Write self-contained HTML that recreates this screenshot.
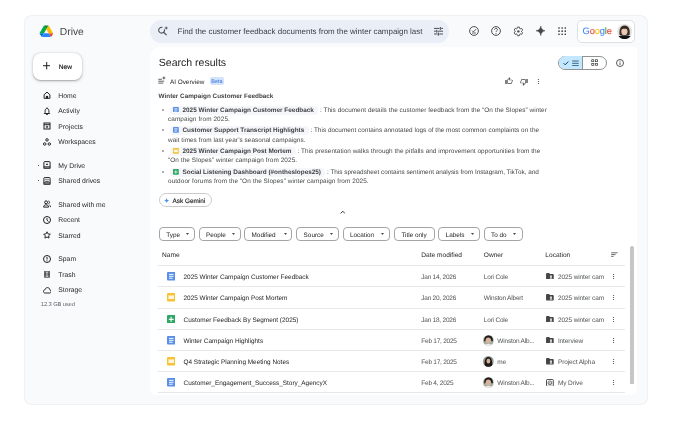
<!DOCTYPE html><html><head><meta charset="utf-8"><style>
html,body{margin:0;padding:0;width:680px;height:421px;overflow:hidden;background:#fff;font-family:"Liberation Sans",sans-serif;}
.a{position:absolute;}
.t{position:absolute;white-space:nowrap;transform:translateZ(0);text-rendering:geometricPrecision;}
</style></head><body>
<div class="a" style="left:25.00px;top:16.00px;width:622.20px;height:387.80px;background:#f9fafc;border-radius:6px;box-shadow:0 0 0 0.7px #e9ebee;"></div>
<svg class="a" style="left:39.30px;top:24.80px" width="14.6" height="12.2" viewBox="0 0 24 22">
<path d="M1.9 18.6l1.1 1.9c.2.4.6.7 1 .9L7.8 15H0c0 .4.1.8.3 1.2z" fill="#0066da"/>
<path d="M12 7.5L8.2 1c-.4.2-.7.5-1 .9L.3 13.8c-.2.4-.3.8-.3 1.2h7.8z" fill="#00ac47"/>
<path d="M20.5 21.4c.4-.2.8-.5 1-.9l.4-.8 2.1-3.5c.2-.4.3-.8.3-1.2h-7.8l1.7 3.3z" fill="#ea4335"/>
<path d="M12 7.5L15.8 1c-.4-.2-.8-.3-1.3-.3H9.5c-.5 0-.9.1-1.3.3z" fill="#00832d"/>
<path d="M16.2 15H7.8L4 21.5c.4.2.8.3 1.3.3h13.5c.5 0 .9-.1 1.3-.3z" fill="#2684fc"/>
<path d="M20.4 7.9l-3.5-6c-.2-.4-.6-.7-1-.9L12 7.5 16.2 15H24c0-.4-.1-.8-.3-1.2z" fill="#ffba00"/>
</svg>
<div class="t" style="left:59.80px;top:26.14px;font-size:10.3px;line-height:13.39px;color:#444746;font-weight:400;">Drive</div>
<div class="a" style="left:150.00px;top:20.00px;width:299.00px;height:22.70px;background:#eaeef7;border-radius:11.3px;"></div>
<svg class="a" style="left:157.00px;top:25.00px" width="11" height="11" viewBox="0 0 11 11"><path d="M5.35 2.4A2.9 2.9 0 1 0 7.4 4.45" fill="none" stroke="#444746" stroke-width="1.05"/><path d="M6.7 7.3L9.6 10.2" stroke="#444746" stroke-width="1.1"/><path d="M9.2 1.5C9.3 2.4 9.8 2.9 10.7 3 9.8 3.1 9.3 3.6 9.2 4.5 9.1 3.6 8.6 3.1 7.7 3 8.6 2.9 9.1 2.4 9.2 1.5z" fill="#444746" stroke="#444746" stroke-width=".3"/></svg>
<div class="t" style="left:177.60px;top:27.49px;font-size:7.94px;line-height:10.32px;color:#3c4043;font-weight:400;">Find the customer feedback documents from the winter campaign last</div>
<svg class="a" style="left:434.10px;top:27.00px" width="9.2" height="9" viewBox="0 0 9.2 9"><g stroke="#444746" stroke-width="0.95"><path d="M0 1.4h5.6M7.2 1.4h2M0 4.2h1.9M3.5 4.2h5.7M0 7.0h3.6M5.2 7.0h4"/><path d="M6.4 0v2.9M2.7 2.8v2.9M4.4 5.6v3.2"/></g></svg>
<svg class="a" style="left:468.60px;top:26.00px" width="10" height="10" viewBox="0 0 10 10"><circle cx="5" cy="5" r="4.4" fill="none" stroke="#444746" stroke-width="0.95"/><path d="M3.1 4.6l1.3 1.3 2.6-2.7" stroke="#444746" stroke-width="0.95" fill="none"/><path d="M3.1 7.0h3.8" stroke="#444746" stroke-width="0.85"/></svg>
<svg class="a" style="left:490.90px;top:26.00px" width="10" height="10" viewBox="0 0 10 10"><circle cx="5" cy="5" r="4.4" fill="none" stroke="#444746" stroke-width="0.95"/><path d="M3.5 3.8c0-.9.7-1.5 1.5-1.5s1.5.6 1.5 1.4c0 1.1-1.5 1.1-1.5 2.3" stroke="#444746" stroke-width="0.9" fill="none"/><circle cx="5" cy="7.5" r=".6" fill="#444746"/></svg>
<svg class="a" style="left:512.60px;top:25.80px" width="10.8" height="10.8" viewBox="0 0 24 24"><path d="M19.14 12.94c.04-.3.06-.61.06-.94 0-.32-.02-.64-.07-.94l2.03-1.58c.18-.14.23-.41.12-.61l-1.92-3.32c-.12-.22-.37-.29-.59-.22l-2.39.96c-.5-.38-1.03-.7-1.62-.94L14.4 2.81c-.04-.24-.24-.41-.48-.41h-3.84c-.24 0-.43.17-.47.41L9.25 5.35c-.59.24-1.13.57-1.62.94L5.24 5.33c-.22-.08-.47 0-.59.22L2.74 8.87c-.12.21-.08.47.12.61l2.03 1.58c-.05.3-.09.63-.09.94s.02.64.07.94l-2.03 1.58c-.18.14-.23.41-.12.61l1.92 3.32c.12.22.37.29.59.22l2.39-.96c.5.38 1.03.7 1.62.94l.36 2.54c.05.24.24.41.48.41h3.84c.24 0 .44-.17.47-.41l.36-2.54c.59-.24 1.13-.56 1.62-.94l2.39.96c.22.08.47 0 .59-.22l1.92-3.32c.12-.22.07-.47-.12-.61z" fill="none" stroke="#444746" stroke-width="2.1"/><circle cx="12" cy="12" r="2.6" fill="#444746"/></svg>
<svg class="a" style="left:535.60px;top:26.00px" width="9.6" height="9.6" viewBox="0 0 9.6 9.6"><path d="M4.8 0C5.0 2.7 6.9 4.6 9.6 4.8 6.9 5.0 5.0 6.9 4.8 9.6 4.6 6.9 2.7 5.0 0 4.8 2.7 4.6 4.6 2.7 4.8 0z" fill="#444746" stroke="#444746" stroke-width="0.5" stroke-linejoin="round"/></svg>
<svg class="a" style="left:558.30px;top:27.10px" width="8" height="8" viewBox="0 0 8 8"><rect x="0.2" y="0.2" width="1.6" height="1.6" rx=".5" fill="#444746"/><rect x="0.2" y="3.35" width="1.6" height="1.6" rx=".5" fill="#444746"/><rect x="0.2" y="6.5" width="1.6" height="1.6" rx=".5" fill="#444746"/><rect x="3.35" y="0.2" width="1.6" height="1.6" rx=".5" fill="#444746"/><rect x="3.35" y="3.35" width="1.6" height="1.6" rx=".5" fill="#444746"/><rect x="3.35" y="6.5" width="1.6" height="1.6" rx=".5" fill="#444746"/><rect x="6.5" y="0.2" width="1.6" height="1.6" rx=".5" fill="#444746"/><rect x="6.5" y="3.35" width="1.6" height="1.6" rx=".5" fill="#444746"/><rect x="6.5" y="6.5" width="1.6" height="1.6" rx=".5" fill="#444746"/></svg>
<div class="a" style="left:577.30px;top:19.60px;width:58.00px;height:23.00px;background:#fff;border:0.8px solid #dde1e6;border-radius:5px;box-sizing:border-box;"></div>
<div class="t" style="left:582.50px;top:24.83px;font-size:9.3px;line-height:12.09px;color:#1f1f1f;font-weight:400;letter-spacing:-0.12px;-webkit-text-stroke:0.12px currentColor;"><span style="color:#4285f4">G</span><span style="color:#ea4335">o</span><span style="color:#fbbc05">o</span><span style="color:#4285f4">g</span><span style="color:#34a853">l</span><span style="color:#ea4335">e</span></div>
<svg class="a" style="left:617.00px;top:23.60px" width="15.2" height="15.2" viewBox="0 0 15.2 15.2"><defs><clipPath id="av"><circle cx="7.6" cy="7.6" r="7.6"/></clipPath></defs><g clip-path="url(#av)"><rect width="15.2" height="15.2" fill="#e4e6e1"/><path d="M2.6 11C1.9 6 3.2 1.4 7.6 1.4s5.8 4.6 5 9.6z" fill="#3b2a22"/><ellipse cx="7.4" cy="7.6" rx="3.1" ry="3.7" fill="#e9c8b3"/><path d="M4.3 5.2c.8-1.5 2-2 3.3-2 1.4 0 2.4.6 3 1.8-1.6-.4-4.2-.5-6.3.2z" fill="#3b2a22"/><path d="M1 12.6c1.6-.9 3.8-1.3 6.6-1.3s5 .4 6.6 1.3V16H1z" fill="#121214"/></g></svg>
<div class="a" style="left:32.60px;top:52.80px;width:49.80px;height:27.40px;background:#fff;border-radius:8px;box-shadow:0 0.5px 1.2px rgba(0,0,0,0.22),0 1px 3px 0.6px rgba(0,0,0,0.11);"></div>
<svg class="a" style="left:43.00px;top:62.30px" width="7.4" height="7.4" viewBox="0 0 7.4 7.4"><path d="M3.7 0v7.4M0 3.7h7.4" stroke="#1f1f1f" stroke-width="1"/></svg>
<div class="t" style="left:58.80px;top:63.82px;font-size:6.6px;line-height:8.58px;color:#1f1f1f;font-weight:400;-webkit-text-stroke:0.18px #1f1f1f;">New</div>
<svg class="a" style="left:42.50px;top:91.40px" width="8" height="8" viewBox="0 0 8 8"><path d="M1.1 3.7L4 1.1l2.9 2.6v3.6H1.1z" fill="none" stroke="#1f1f1f" stroke-width="1" stroke-linejoin="round"/><rect x="2.9" y="4.9" width="2.2" height="2.5" fill="#1f1f1f"/></svg>
<div class="t" style="left:58.30px;top:92.62px;font-size:6.8px;line-height:8.84px;color:#1f1f1f;font-weight:400;">Home</div>
<svg class="a" style="left:42.50px;top:107.10px" width="8" height="8" viewBox="0 0 8 8"><path d="M2.1 5.6V3.7C2.1 2.5 2.9 1.5 4 1.5s1.9 1 1.9 2.2v1.9l.9.9H1.2z" fill="none" stroke="#1f1f1f" stroke-width="0.95" stroke-linejoin="round"/><path d="M3.2 7.5h1.6" stroke="#1f1f1f" stroke-width="1"/><path d="M4 0.4v1.1" stroke="#1f1f1f" stroke-width="0.9"/></svg>
<div class="t" style="left:58.30px;top:108.32px;font-size:6.8px;line-height:8.84px;color:#1f1f1f;font-weight:400;">Activity</div>
<svg class="a" style="left:42.50px;top:122.40px" width="8" height="8" viewBox="0 0 8 8"><rect x="1" y="1" width="6" height="6" fill="none" stroke="#1f1f1f" stroke-width="1"/><path d="M1 2.7h6" stroke="#1f1f1f" stroke-width="1"/><path d="M4 3.7v2.4M2.8 4.9h2.4" stroke="#1f1f1f" stroke-width="0.85"/></svg>
<div class="t" style="left:58.30px;top:123.62px;font-size:6.8px;line-height:8.84px;color:#1f1f1f;font-weight:400;">Projects</div>
<svg class="a" style="left:42.50px;top:137.90px" width="8" height="8" viewBox="0 0 8 8"><circle cx="4" cy="1.9" r="1.25" fill="none" stroke="#1f1f1f" stroke-width="0.95"/><circle cx="1.7" cy="6.0" r="1.25" fill="none" stroke="#1f1f1f" stroke-width="0.95"/><circle cx="6.3" cy="6.0" r="1.25" fill="none" stroke="#1f1f1f" stroke-width="0.95"/></svg>
<div class="t" style="left:58.30px;top:139.12px;font-size:6.8px;line-height:8.84px;color:#1f1f1f;font-weight:400;">Workspaces</div>
<svg class="a" style="left:42.50px;top:161.40px" width="8" height="8" viewBox="0 0 8 8"><rect x="0.9" y="0.6" width="6.2" height="7.2" rx=".7" fill="none" stroke="#1f1f1f" stroke-width="1"/><path d="M0.9 5.9h6.2" stroke="#1f1f1f" stroke-width="1"/><rect x="0.9" y="5.9" width="6.2" height="1.9" fill="#1f1f1f" opacity=".35"/><path d="M4 2.1l1.1 1.9H2.9z" fill="#1f1f1f"/></svg>
<div class="t" style="left:58.30px;top:162.62px;font-size:6.8px;line-height:8.84px;color:#1f1f1f;font-weight:400;">My Drive</div>
<svg class="a" style="left:42.50px;top:176.80px" width="8" height="8" viewBox="0 0 8 8"><rect x="0.9" y="0.6" width="6.2" height="7.2" rx=".7" fill="none" stroke="#1f1f1f" stroke-width="1"/><path d="M0.9 5.9h6.2" stroke="#1f1f1f" stroke-width="1"/><rect x="0.9" y="5.9" width="6.2" height="1.9" fill="#1f1f1f" opacity=".35"/><circle cx="3" cy="2.6" r=".6" fill="#1f1f1f"/><circle cx="5" cy="2.6" r=".6" fill="#1f1f1f"/><path d="M2.2 4.4h3.6" stroke="#1f1f1f" stroke-width=".8"/></svg>
<div class="t" style="left:58.30px;top:178.02px;font-size:6.8px;line-height:8.84px;color:#1f1f1f;font-weight:400;">Shared drives</div>
<svg class="a" style="left:42.50px;top:200.30px" width="8" height="8" viewBox="0 0 8 8"><circle cx="3.1" cy="2.3" r="1.45" fill="none" stroke="#1f1f1f" stroke-width="1"/><path d="M0.6 7.1c0-1.5 1.1-2.3 2.5-2.3s2.5.8 2.5 2.3z" fill="none" stroke="#1f1f1f" stroke-width="1" stroke-linejoin="round"/><path d="M5.3 0.9c.8.2 1.3.8 1.3 1.5S6.1 3.7 5.3 3.9M6.4 5c.8.3 1.2 1 1.2 2.1" stroke="#1f1f1f" stroke-width="0.9" fill="none"/></svg>
<div class="t" style="left:58.30px;top:201.52px;font-size:6.8px;line-height:8.84px;color:#1f1f1f;font-weight:400;">Shared with me</div>
<svg class="a" style="left:42.50px;top:216.10px" width="8" height="8" viewBox="0 0 8 8"><circle cx="4" cy="4" r="3.5" fill="none" stroke="#1f1f1f" stroke-width="1"/><path d="M4 2.1v2.1l1.5 1.3" stroke="#1f1f1f" stroke-width="0.95" fill="none"/></svg>
<div class="t" style="left:58.30px;top:217.32px;font-size:6.8px;line-height:8.84px;color:#1f1f1f;font-weight:400;">Recent</div>
<svg class="a" style="left:42.50px;top:231.40px" width="8" height="8" viewBox="0 0 8 8"><path d="M4 0.8l1 2.1 2.3.3-1.7 1.6.4 2.3L4 6 1.9 7.1l.4-2.3L.7 3.2 3 2.9z" fill="none" stroke="#1f1f1f" stroke-width="0.95" stroke-linejoin="round"/></svg>
<div class="t" style="left:58.30px;top:232.62px;font-size:6.8px;line-height:8.84px;color:#1f1f1f;font-weight:400;">Starred</div>
<svg class="a" style="left:42.50px;top:254.70px" width="8" height="8" viewBox="0 0 8 8"><circle cx="4" cy="4" r="3.5" fill="none" stroke="#1f1f1f" stroke-width="1"/><path d="M4 2v2.5" stroke="#1f1f1f" stroke-width="1"/><circle cx="4" cy="5.8" r=".55" fill="#1f1f1f"/></svg>
<div class="t" style="left:58.30px;top:255.92px;font-size:6.8px;line-height:8.84px;color:#1f1f1f;font-weight:400;">Spam</div>
<svg class="a" style="left:42.50px;top:270.40px" width="8" height="8" viewBox="0 0 8 8"><rect x="1.1" y="0.9" width="5.8" height="6.8" rx=".4" fill="#1f1f1f" opacity=".75"/><path d="M2.6 2.1h2.8M2.6 6.3h2.8M4 2.1v4.2" stroke="#f8fafd" stroke-width=".75"/></svg>
<div class="t" style="left:58.30px;top:271.62px;font-size:6.8px;line-height:8.84px;color:#1f1f1f;font-weight:400;">Trash</div>
<svg class="a" style="left:42.50px;top:285.90px" width="8" height="8" viewBox="0 0 8 8"><path d="M2.1 7.0C1.1 7.0.4 6.3.4 5.4S1.1 3.8 2 3.8C2.3 2.5 3.2 1.6 4.4 1.6c1.4 0 2.4 1 2.5 2.3.8.2 1.2.8 1.2 1.6 0 .8-.6 1.5-1.4 1.5z" fill="none" stroke="#1f1f1f" stroke-width="0.95" stroke-linejoin="round"/></svg>
<div class="t" style="left:58.30px;top:287.12px;font-size:6.8px;line-height:8.84px;color:#1f1f1f;font-weight:400;">Storage</div>
<div class="a" style="left:37.60px;top:164.50px;width:1.60px;height:1.60px;background:#2a2a2a;border-radius:50%;"></div>
<div class="a" style="left:37.60px;top:179.90px;width:1.60px;height:1.60px;background:#2a2a2a;border-radius:50%;"></div>
<div class="t" style="left:40.80px;top:302.02px;font-size:5.7px;line-height:7.41px;color:#5f6368;font-weight:400;letter-spacing:-0.05px;">12.3 GB used</div>
<div class="a" style="left:149.50px;top:47.30px;width:487.00px;height:348.20px;background:#fff;border-radius:10px 3px 6px 6px;"></div>
<div class="t" style="left:158.80px;top:57.10px;font-size:10.54px;line-height:13.7px;color:#1f1f1f;font-weight:400;">Search results</div>
<div class="a" style="left:558.00px;top:55.50px;width:49.10px;height:14.00px;border:0.75px solid #8f9391;border-radius:7px;box-sizing:border-box;overflow:hidden;background:#fff;"></div>
<div class="a" style="left:558.75px;top:56.25px;width:24.00px;height:12.50px;background:#c2e7ff;border-radius:6.3px 0 0 6.3px;"></div>
<div class="a" style="left:582.40px;top:55.80px;width:0.70px;height:13.40px;background:#8f9391;"></div>
<svg class="a" style="left:562.80px;top:59.50px" width="17" height="6.5" viewBox="0 0 17 6.5"><path d="M0.6 3.2l1.6 1.6 3.1-3.2" fill="none" stroke="#0b3b5c" stroke-width="0.95"/><path d="M9.2 1h6.5M9.2 3.3h6.5M9.2 5.6h6.5" stroke="#2c5878" stroke-width="0.9"/></svg>
<svg class="a" style="left:591.30px;top:59.20px" width="7.2" height="7" viewBox="0 0 7.2 7"><g fill="#444746"><rect x=".3" y=".3" width="2.9" height="2.8" rx=".7"/><rect x="4" y=".3" width="2.9" height="2.8" rx=".7"/><rect x=".3" y="3.9" width="2.9" height="2.8" rx=".7"/><rect x="4" y="3.9" width="2.9" height="2.8" rx=".7"/></g><g fill="#fff"><rect x="1.1" y="1.1" width="1.3" height="1.2" rx=".2"/><rect x="4.8" y="1.1" width="1.3" height="1.2" rx=".2"/><rect x="1.1" y="4.7" width="1.3" height="1.2" rx=".2"/><rect x="4.8" y="4.7" width="1.3" height="1.2" rx=".2"/></g></svg>
<svg class="a" style="left:615.60px;top:58.60px" width="8" height="8" viewBox="0 0 8 8"><circle cx="4" cy="4" r="3.5" fill="none" stroke="#444746" stroke-width="0.9"/><path d="M4 3.5v2.5" stroke="#444746" stroke-width="0.9"/><circle cx="4" cy="2.3" r=".5" fill="#444746"/></svg>
<svg class="a" style="left:158.00px;top:76.00px" width="8" height="8" viewBox="0 0 8 8"><path d="M0.3 3.3h3.6M0.3 5.2h5.9M0.3 7.1h5" stroke="#444746" stroke-width="0.85"/><path d="M5.9 0.4C6 1.3 6.5 1.8 7.4 1.9 6.5 2 6 2.5 5.9 3.4 5.8 2.5 5.3 2 4.4 1.9 5.3 1.8 5.8 1.3 5.9.4z" fill="#444746" stroke="#444746" stroke-width=".3"/></svg>
<div class="t" style="left:169.90px;top:78.82px;font-size:6.4px;line-height:8.32px;color:#1f1f1f;font-weight:400;">AI Overview</div>
<div class="a" style="left:209.60px;top:77.20px;width:14.70px;height:8.10px;background:#d3e3fd;border-radius:2px;"></div>
<div class="t" style="left:211.30px;top:79.32px;font-size:5.5px;line-height:7.15px;color:#3d72d4;font-weight:400;">Beta</div>
<svg class="a" style="left:504.50px;top:76.80px" width="8" height="8" viewBox="0 0 24 24"><path d="M21 8h-6.31l.95-4.57.03-.32c0-.41-.17-.79-.44-1.06L14.17 1 7.590 7.590C7.220 7.950 7 8.450 7 9v10c0 1.1.9 2 2 2h9c.83 0 1.540-.5 1.840-1.220l3.020-7.050c.09-.23.14-.47.14-.73v-2c0-1.1-.9-2-2-2zm0 4l-3 7H9V9l4.340-4.340L12.230 10H21v2zM1 9h4v12H1z" fill="#444746"/></svg>
<svg class="a" style="left:519.60px;top:77.60px" width="8" height="8" viewBox="0 0 24 24"><path d="M15 3H6c-.83 0-1.54.5-1.84 1.22l-3.02 7.05c-.09.23-.14.47-.14.73v2c0 1.1.9 2 2 2h6.31l-.95 4.57-.03.32c0 .41.17.79.44 1.06L9.83 23l6.59-6.59c.36-.36.58-.86.58-1.41V5c0-1.1-.9-2-2-2zm0 12l-4.34 4.34L12 14H3v-2l3-7h9v10zm4-12h4v12h-4z" fill="#444746"/></svg>
<svg class="a" style="left:537.00px;top:78.00px" width="3" height="7" viewBox="0 0 3 7"><circle cx="1.5" cy="1.5" r=".62" fill="#444746"/><circle cx="1.5" cy="3.5" r=".62" fill="#444746"/><circle cx="1.5" cy="5.5" r=".62" fill="#444746"/></svg>
<div class="t" style="left:158.60px;top:92.55px;font-size:6.37px;line-height:8.28px;color:#404244;font-weight:700;">Winter Campaign Customer Feedback</div>
<svg class="a" style="left:161.80px;top:108.50px" width="2" height="2" viewBox="0 0 2 2"><circle cx="1" cy="1" r="0.75" fill="#333"/></svg>
<div class="t" style="left:170px;top:105.58px;height:9.0px;line-height:9.0px;font-size:6.4px;color:#444746;"><span style="display:inline-block;vertical-align:top;background:#f4f6f9;border-radius:4px;padding:0 4.3px 0 12.5px;height:9.0px;line-height:9.0px;color:#404244;font-weight:700;">2025 Winter Campaign Customer Feedback</span><span style="letter-spacing:0.056px"> : This document details the customer feedback from the “On the Slopes” winter</span></div>
<svg class="a" style="left:173.00px;top:106.70px" width="5.8" height="5.8" viewBox="0 0 6 6"><rect width="6" height="6" rx=".7" fill="#5a8fe8"/><path d="M1.4 1.7h3.2M1.4 3.05h3.2M1.4 4.4h2.6" stroke="#fff" stroke-width=".65"/></svg>
<div class="t" style="left:168.00px;top:115.77px;font-size:6.4px;line-height:8.32px;color:#444746;font-weight:400;letter-spacing:0.1px;">campaign from 2025.</div>
<svg class="a" style="left:161.80px;top:129.00px" width="2" height="2" viewBox="0 0 2 2"><circle cx="1" cy="1" r="0.75" fill="#333"/></svg>
<div class="t" style="left:170px;top:126.08px;height:9.0px;line-height:9.0px;font-size:6.4px;color:#444746;"><span style="display:inline-block;vertical-align:top;background:#f4f6f9;border-radius:4px;padding:0 4.3px 0 12.5px;height:9.0px;line-height:9.0px;color:#404244;font-weight:700;">Customer Support Transcript Highlights</span><span style="letter-spacing:0.033px"> : This document contains annotated logs of the most common complaints on the</span></div>
<svg class="a" style="left:173.00px;top:127.20px" width="5.8" height="5.8" viewBox="0 0 6 6"><rect width="6" height="6" rx=".7" fill="#5a8fe8"/><path d="M1.4 1.7h3.2M1.4 3.05h3.2M1.4 4.4h2.6" stroke="#fff" stroke-width=".65"/></svg>
<div class="t" style="left:168.00px;top:136.62px;font-size:6.4px;line-height:8.32px;color:#444746;font-weight:400;letter-spacing:0.043px;">wait times from last year’s seasonal campaigns.</div>
<svg class="a" style="left:161.80px;top:149.70px" width="2" height="2" viewBox="0 0 2 2"><circle cx="1" cy="1" r="0.75" fill="#333"/></svg>
<div class="t" style="left:170px;top:146.78px;height:9.0px;line-height:9.0px;font-size:6.4px;color:#444746;"><span style="display:inline-block;vertical-align:top;background:#f4f6f9;border-radius:4px;padding:0 4.3px 0 12.5px;height:9.0px;line-height:9.0px;color:#404244;font-weight:700;">2025 Winter Campaign Post Mortem</span><span style="letter-spacing:0.044px"> : This presentation walks through the pitfalls and improvement opportunities from the</span></div>
<svg class="a" style="left:173.00px;top:147.90px" width="5.8" height="5.8" viewBox="0 0 6 6"><rect width="6" height="6" rx=".7" fill="#f5c234"/><rect x="1.0" y="1.7" width="4.0" height="2.6" fill="#fdf5d8"/></svg>
<div class="t" style="left:168.00px;top:157.32px;font-size:6.4px;line-height:8.32px;color:#444746;font-weight:400;letter-spacing:0.09px;">“On the Slopes” winter campaign from 2025.</div>
<svg class="a" style="left:161.80px;top:170.60px" width="2" height="2" viewBox="0 0 2 2"><circle cx="1" cy="1" r="0.75" fill="#333"/></svg>
<div class="t" style="left:170px;top:167.68px;height:9.0px;line-height:9.0px;font-size:6.4px;color:#444746;"><span style="display:inline-block;vertical-align:top;background:#f4f6f9;border-radius:4px;padding:0 4.3px 0 12.5px;height:9.0px;line-height:9.0px;color:#404244;font-weight:700;">Social Listening Dashboard (#ontheslopes25)</span><span style="letter-spacing:-0.017px"> : This spreadsheet contains sentiment analysis from Instagram, TikTok, and</span></div>
<svg class="a" style="left:173.00px;top:168.80px" width="5.8" height="5.8" viewBox="0 0 6 6"><rect width="6" height="6" rx=".7" fill="#2fa866"/><path d="M1.3 3.1h3.4M2.9 1.3v3.4" stroke="#fff" stroke-width=".75"/></svg>
<div class="t" style="left:168.00px;top:178.12px;font-size:6.4px;line-height:8.32px;color:#444746;font-weight:400;letter-spacing:0.08px;">outdoor forums from the “On the Slopes” winter campaign from 2025.</div>
<div class="a" style="left:158.70px;top:193.20px;width:53.70px;height:14.20px;border:0.75px solid #c9cccb;border-radius:7px;box-sizing:border-box;background:#fff;"></div>
<svg class="a" style="left:164.00px;top:197.60px" width="5.2" height="5.2" viewBox="0 0 5.2 5.2"><path d="M2.6 0C2.8 1.4 3.8 2.4 5.2 2.6 3.8 2.8 2.8 3.8 2.6 5.2 2.4 3.8 1.4 2.8 0 2.6 1.4 2.4 2.4 1.4 2.6 0z" fill="#4c8df6"/></svg>
<div class="t" style="left:172.60px;top:197.92px;font-size:6.4px;line-height:8.32px;color:#1f1f1f;font-weight:400;-webkit-text-stroke:0.15px #1f1f1f;">Ask Gemini</div>
<svg class="a" style="left:339.60px;top:210.00px" width="5.6" height="4.4" viewBox="0 0 5.6 4.4"><path d="M0.6 3.5L2.8 1.2 5.0 3.5" fill="none" stroke="#2a2a2a" stroke-width="0.95"/></svg>
<div class="a" style="left:158.60px;top:227.00px;width:36.70px;height:13.60px;border:0.75px solid #a3a6a4;border-radius:4px;box-sizing:border-box;"></div>
<div class="t" style="left:166.30px;top:231.52px;font-size:6.4px;line-height:8.32px;color:#1f1f1f;font-weight:400;">Type</div>
<svg class="a" style="left:186.00px;top:233.30px" width="3" height="1.9" viewBox="0 0 3 1.9"><path d="M0 0h3L1.5 1.9z" fill="#444746"/></svg>
<div class="a" style="left:199.00px;top:227.00px;width:41.70px;height:13.60px;border:0.75px solid #a3a6a4;border-radius:4px;box-sizing:border-box;"></div>
<div class="t" style="left:206.00px;top:231.52px;font-size:6.4px;line-height:8.32px;color:#1f1f1f;font-weight:400;">People</div>
<svg class="a" style="left:231.90px;top:233.30px" width="3" height="1.9" viewBox="0 0 3 1.9"><path d="M0 0h3L1.5 1.9z" fill="#444746"/></svg>
<div class="a" style="left:244.40px;top:227.00px;width:48.10px;height:13.60px;border:0.75px solid #a3a6a4;border-radius:4px;box-sizing:border-box;"></div>
<div class="t" style="left:251.50px;top:231.52px;font-size:6.4px;line-height:8.32px;color:#1f1f1f;font-weight:400;">Modified</div>
<svg class="a" style="left:283.80px;top:233.30px" width="3" height="1.9" viewBox="0 0 3 1.9"><path d="M0 0h3L1.5 1.9z" fill="#444746"/></svg>
<div class="a" style="left:296.30px;top:227.00px;width:42.40px;height:13.60px;border:0.75px solid #a3a6a4;border-radius:4px;box-sizing:border-box;"></div>
<div class="t" style="left:303.60px;top:231.52px;font-size:6.4px;line-height:8.32px;color:#1f1f1f;font-weight:400;">Source</div>
<svg class="a" style="left:329.70px;top:233.30px" width="3" height="1.9" viewBox="0 0 3 1.9"><path d="M0 0h3L1.5 1.9z" fill="#444746"/></svg>
<div class="a" style="left:342.60px;top:227.00px;width:47.50px;height:13.60px;border:0.75px solid #a3a6a4;border-radius:4px;box-sizing:border-box;"></div>
<div class="t" style="left:350.00px;top:231.52px;font-size:6.4px;line-height:8.32px;color:#1f1f1f;font-weight:400;">Location</div>
<svg class="a" style="left:380.90px;top:233.30px" width="3" height="1.9" viewBox="0 0 3 1.9"><path d="M0 0h3L1.5 1.9z" fill="#444746"/></svg>
<div class="a" style="left:394.20px;top:227.00px;width:40.70px;height:13.60px;border:0.75px solid #a3a6a4;border-radius:4px;box-sizing:border-box;"></div>
<div class="t" style="left:401.40px;top:231.52px;font-size:6.4px;line-height:8.32px;color:#1f1f1f;font-weight:400;">Title only</div>
<div class="a" style="left:438.40px;top:227.00px;width:41.80px;height:13.60px;border:0.75px solid #a3a6a4;border-radius:4px;box-sizing:border-box;"></div>
<div class="t" style="left:445.60px;top:231.52px;font-size:6.4px;line-height:8.32px;color:#1f1f1f;font-weight:400;">Labels</div>
<svg class="a" style="left:470.90px;top:233.30px" width="3" height="1.9" viewBox="0 0 3 1.9"><path d="M0 0h3L1.5 1.9z" fill="#444746"/></svg>
<div class="a" style="left:483.70px;top:227.00px;width:39.20px;height:13.60px;border:0.75px solid #a3a6a4;border-radius:4px;box-sizing:border-box;"></div>
<div class="t" style="left:491.00px;top:231.52px;font-size:6.4px;line-height:8.32px;color:#1f1f1f;font-weight:400;">To do</div>
<svg class="a" style="left:513.10px;top:233.30px" width="3" height="1.9" viewBox="0 0 3 1.9"><path d="M0 0h3L1.5 1.9z" fill="#444746"/></svg>
<div class="t" style="left:162.00px;top:252.42px;font-size:6.6px;line-height:8.58px;color:#1f1f1f;font-weight:400;">Name</div>
<div class="t" style="left:421.30px;top:252.42px;font-size:6.6px;line-height:8.58px;color:#1f1f1f;font-weight:400;">Date modified</div>
<div class="t" style="left:483.80px;top:252.42px;font-size:6.6px;line-height:8.58px;color:#1f1f1f;font-weight:400;">Owner</div>
<div class="t" style="left:545.30px;top:252.42px;font-size:6.6px;line-height:8.58px;color:#1f1f1f;font-weight:400;">Location</div>
<svg class="a" style="left:610.80px;top:252.40px" width="7" height="5.4" viewBox="0 0 7 5.4"><path d="M.2 .8h6.4M.2 2.6h4.4M.2 4.4h2.4" stroke="#444746" stroke-width="0.8"/></svg>
<div class="a" style="left:158.00px;top:264.80px;width:466.80px;height:0.80px;background:#e8e8e8;"></div>
<div class="a" style="left:158.00px;top:286.20px;width:466.80px;height:0.80px;background:#e8e8e8;"></div>
<div class="a" style="left:158.00px;top:307.60px;width:466.80px;height:0.80px;background:#e8e8e8;"></div>
<div class="a" style="left:158.00px;top:329.00px;width:466.80px;height:0.80px;background:#e8e8e8;"></div>
<div class="a" style="left:158.00px;top:350.10px;width:466.80px;height:0.80px;background:#e8e8e8;"></div>
<div class="a" style="left:158.00px;top:371.10px;width:466.80px;height:0.80px;background:#e8e8e8;"></div>
<div class="a" style="left:158.00px;top:392.10px;width:466.80px;height:0.80px;background:#e8e8e8;"></div>
<svg class="a" style="left:166.60px;top:272.00px" width="8.5" height="8.5" viewBox="0 0 6 6"><rect width="6" height="6" rx=".7" fill="#5a8fe8"/><path d="M1.4 1.7h3.2M1.4 3.05h3.2M1.4 4.4h2.6" stroke="#fff" stroke-width=".65"/></svg>
<div class="t" style="left:183.50px;top:273.99px;font-size:6.43px;line-height:8.36px;color:#1f1f1f;font-weight:400;">2025 Winter Campaign Customer Feedback</div>
<div class="t" style="left:421.30px;top:273.92px;font-size:6.5px;line-height:8.45px;color:#505355;font-weight:400;letter-spacing:-0.24px;">Jan 14, 2026</div>
<div class="t" style="left:483.80px;top:273.92px;font-size:6.5px;line-height:8.45px;color:#505355;font-weight:400;letter-spacing:-0.2px;">Lori Cole</div>
<svg class="a" style="left:545.80px;top:272.70px" width="7.8" height="6.6" viewBox="0 0 7.8 6.7"><path d="M0 .9C0 .4.4 0 .9 0h2.2l.9.9h2.9c.5 0 .9.4.9.9v4c0 .5-.4.9-.9.9H.9C.4 6.7 0 6.3 0 5.8z" fill="#444746"/><circle cx="5" cy="3.2" r=".85" fill="#fff"/><path d="M3.7 5.5c0-.8.6-1.2 1.3-1.2s1.3.4 1.3 1.2z" fill="#fff"/></svg>
<div class="t" style="left:557.90px;top:273.92px;font-size:6.5px;line-height:8.45px;color:#505355;font-weight:400;letter-spacing:-0.1px;">2025 winter cam</div>
<svg class="a" style="left:612.00px;top:273.00px" width="3" height="7" viewBox="0 0 3 7"><circle cx="1.5" cy="1.5" r=".62" fill="#444746"/><circle cx="1.5" cy="3.5" r=".62" fill="#444746"/><circle cx="1.5" cy="5.5" r=".62" fill="#444746"/></svg>
<svg class="a" style="left:166.60px;top:293.40px" width="8.5" height="8.5" viewBox="0 0 6 6"><rect width="6" height="6" rx=".7" fill="#f5c234"/><rect x="1.0" y="1.7" width="4.0" height="2.6" fill="#fdf5d8"/></svg>
<div class="t" style="left:183.50px;top:295.39px;font-size:6.43px;line-height:8.36px;color:#1f1f1f;font-weight:400;">2025 Winter Campaign Post Mortem</div>
<div class="t" style="left:421.30px;top:295.32px;font-size:6.5px;line-height:8.45px;color:#505355;font-weight:400;letter-spacing:-0.24px;">Jan 20, 2026</div>
<div class="t" style="left:483.80px;top:295.32px;font-size:6.5px;line-height:8.45px;color:#505355;font-weight:400;letter-spacing:-0.2px;">Winston Albert</div>
<svg class="a" style="left:545.80px;top:294.10px" width="7.8" height="6.6" viewBox="0 0 7.8 6.7"><path d="M0 .9C0 .4.4 0 .9 0h2.2l.9.9h2.9c.5 0 .9.4.9.9v4c0 .5-.4.9-.9.9H.9C.4 6.7 0 6.3 0 5.8z" fill="#444746"/><circle cx="5" cy="3.2" r=".85" fill="#fff"/><path d="M3.7 5.5c0-.8.6-1.2 1.3-1.2s1.3.4 1.3 1.2z" fill="#fff"/></svg>
<div class="t" style="left:557.90px;top:295.32px;font-size:6.5px;line-height:8.45px;color:#505355;font-weight:400;letter-spacing:-0.1px;">2025 winter cam</div>
<svg class="a" style="left:612.00px;top:294.00px" width="3" height="7" viewBox="0 0 3 7"><circle cx="1.5" cy="1.5" r=".62" fill="#444746"/><circle cx="1.5" cy="3.5" r=".62" fill="#444746"/><circle cx="1.5" cy="5.5" r=".62" fill="#444746"/></svg>
<svg class="a" style="left:166.60px;top:314.80px" width="8.5" height="8.5" viewBox="0 0 6 6"><rect width="6" height="6" rx=".7" fill="#2fa866"/><path d="M1.3 3.1h3.4M2.9 1.3v3.4" stroke="#fff" stroke-width=".75"/></svg>
<div class="t" style="left:183.50px;top:316.79px;font-size:6.43px;line-height:8.36px;color:#1f1f1f;font-weight:400;">Customer Feedback By Segment (2025)</div>
<div class="t" style="left:421.30px;top:316.72px;font-size:6.5px;line-height:8.45px;color:#505355;font-weight:400;letter-spacing:-0.24px;">Jan 18, 2026</div>
<div class="t" style="left:483.80px;top:316.72px;font-size:6.5px;line-height:8.45px;color:#505355;font-weight:400;letter-spacing:-0.2px;">Lori Cole</div>
<svg class="a" style="left:545.80px;top:315.50px" width="7.8" height="6.6" viewBox="0 0 7.8 6.7"><path d="M0 .9C0 .4.4 0 .9 0h2.2l.9.9h2.9c.5 0 .9.4.9.9v4c0 .5-.4.9-.9.9H.9C.4 6.7 0 6.3 0 5.8z" fill="#444746"/><circle cx="5" cy="3.2" r=".85" fill="#fff"/><path d="M3.7 5.5c0-.8.6-1.2 1.3-1.2s1.3.4 1.3 1.2z" fill="#fff"/></svg>
<div class="t" style="left:557.90px;top:316.72px;font-size:6.5px;line-height:8.45px;color:#505355;font-weight:400;letter-spacing:-0.1px;">2025 winter cam</div>
<svg class="a" style="left:612.00px;top:316.00px" width="3" height="7" viewBox="0 0 3 7"><circle cx="1.5" cy="1.5" r=".62" fill="#444746"/><circle cx="1.5" cy="3.5" r=".62" fill="#444746"/><circle cx="1.5" cy="5.5" r=".62" fill="#444746"/></svg>
<svg class="a" style="left:166.60px;top:336.20px" width="8.5" height="8.5" viewBox="0 0 6 6"><rect width="6" height="6" rx=".7" fill="#5a8fe8"/><path d="M1.4 1.7h3.2M1.4 3.05h3.2M1.4 4.4h2.6" stroke="#fff" stroke-width=".65"/></svg>
<div class="t" style="left:183.50px;top:338.19px;font-size:6.43px;line-height:8.36px;color:#1f1f1f;font-weight:400;">Winter Campaign Highlights</div>
<div class="t" style="left:421.30px;top:338.12px;font-size:6.5px;line-height:8.45px;color:#505355;font-weight:400;letter-spacing:-0.24px;">Feb 17, 2025</div>
<svg class="a" style="left:483.20px;top:335.00px" width="10.8" height="10.8" viewBox="0 0 10.6 10.6"><defs><clipPath id="c329"><circle cx="5.3" cy="5.3" r="5.3"/></clipPath></defs><g clip-path="url(#c329)"><rect width="10.6" height="10.6" fill="#a3ada3"/><path d="M1.2 6.2C.9 2.6 2.8.6 5.4.6s4.6 1.8 4.3 5.4c-.5.3-1 .5-1.4.2-.2-1.5-.8-2.6-1.6-3.0H3.9C3 3.6 2.5 4.8 2.4 6.2c-.4.2-.8.2-1.2 0z" fill="#211a17"/><ellipse cx="5.2" cy="5.4" rx="2.5" ry="3.0" fill="#d8b3a0"/><path d="M1.0 11c.6-1.6 2.2-2.4 4.2-2.4s3.6.8 4.2 2.4z" fill="#eceae6"/></g></svg>
<div class="t" style="left:497.30px;top:338.12px;font-size:6.5px;line-height:8.45px;color:#505355;font-weight:400;letter-spacing:-0.2px;">Winston Alb...</div>
<svg class="a" style="left:545.80px;top:336.90px" width="7.8" height="6.6" viewBox="0 0 7.8 6.7"><path d="M0 .9C0 .4.4 0 .9 0h2.2l.9.9h2.9c.5 0 .9.4.9.9v4c0 .5-.4.9-.9.9H.9C.4 6.7 0 6.3 0 5.8z" fill="#444746"/><circle cx="5" cy="3.2" r=".85" fill="#fff"/><path d="M3.7 5.5c0-.8.6-1.2 1.3-1.2s1.3.4 1.3 1.2z" fill="#fff"/></svg>
<div class="t" style="left:557.90px;top:338.12px;font-size:6.5px;line-height:8.45px;color:#505355;font-weight:400;letter-spacing:-0.1px;">Interview</div>
<svg class="a" style="left:612.00px;top:337.00px" width="3" height="7" viewBox="0 0 3 7"><circle cx="1.5" cy="1.5" r=".62" fill="#444746"/><circle cx="1.5" cy="3.5" r=".62" fill="#444746"/><circle cx="1.5" cy="5.5" r=".62" fill="#444746"/></svg>
<svg class="a" style="left:166.60px;top:357.30px" width="8.5" height="8.5" viewBox="0 0 6 6"><rect width="6" height="6" rx=".7" fill="#f5c234"/><rect x="1.0" y="1.7" width="4.0" height="2.6" fill="#fdf5d8"/></svg>
<div class="t" style="left:183.50px;top:359.29px;font-size:6.43px;line-height:8.36px;color:#1f1f1f;font-weight:400;">Q4 Strategic Planning Meeting Notes</div>
<div class="t" style="left:421.30px;top:359.22px;font-size:6.5px;line-height:8.45px;color:#505355;font-weight:400;letter-spacing:-0.24px;">Feb 17, 2025</div>
<svg class="a" style="left:483.20px;top:356.10px" width="10.8" height="10.8" viewBox="0 0 10.6 10.6"><defs><clipPath id="c350"><circle cx="5.3" cy="5.3" r="5.3"/></clipPath></defs><g clip-path="url(#c350)"><rect width="10.6" height="10.6" fill="#8e9c91"/><path d="M1.6 10.6C1.3 6 1.6 .9 5.3.9s4 5.1 3.7 9.7z" fill="#1e1816"/><ellipse cx="5.3" cy="4.9" rx="1.9" ry="2.5" fill="#d6b09a"/><path d="M3 10.8c.3-1.2 1.2-1.8 2.3-1.8s2 .6 2.3 1.8z" fill="#2b2b2e"/></g></svg>
<div class="t" style="left:497.30px;top:359.22px;font-size:6.5px;line-height:8.45px;color:#505355;font-weight:400;letter-spacing:-0.2px;">me</div>
<svg class="a" style="left:545.80px;top:358.00px" width="7.8" height="6.6" viewBox="0 0 7.8 6.7"><path d="M0 .9C0 .4.4 0 .9 0h2.2l.9.9h2.9c.5 0 .9.4.9.9v4c0 .5-.4.9-.9.9H.9C.4 6.7 0 6.3 0 5.8z" fill="#444746"/><circle cx="5" cy="3.2" r=".85" fill="#fff"/><path d="M3.7 5.5c0-.8.6-1.2 1.3-1.2s1.3.4 1.3 1.2z" fill="#fff"/></svg>
<div class="t" style="left:557.90px;top:359.22px;font-size:6.5px;line-height:8.45px;color:#505355;font-weight:400;letter-spacing:-0.1px;">Project Alpha</div>
<svg class="a" style="left:612.00px;top:358.00px" width="3" height="7" viewBox="0 0 3 7"><circle cx="1.5" cy="1.5" r=".62" fill="#444746"/><circle cx="1.5" cy="3.5" r=".62" fill="#444746"/><circle cx="1.5" cy="5.5" r=".62" fill="#444746"/></svg>
<svg class="a" style="left:166.60px;top:378.30px" width="8.5" height="8.5" viewBox="0 0 6 6"><rect width="6" height="6" rx=".7" fill="#5a8fe8"/><path d="M1.4 1.7h3.2M1.4 3.05h3.2M1.4 4.4h2.6" stroke="#fff" stroke-width=".65"/></svg>
<div class="t" style="left:183.50px;top:380.29px;font-size:6.43px;line-height:8.36px;color:#1f1f1f;font-weight:400;">Customer_Engagement_Success_Story_AgencyX</div>
<div class="t" style="left:421.30px;top:380.22px;font-size:6.5px;line-height:8.45px;color:#505355;font-weight:400;letter-spacing:-0.24px;">Feb 4, 2025</div>
<svg class="a" style="left:483.20px;top:377.10px" width="10.8" height="10.8" viewBox="0 0 10.6 10.6"><defs><clipPath id="c371"><circle cx="5.3" cy="5.3" r="5.3"/></clipPath></defs><g clip-path="url(#c371)"><rect width="10.6" height="10.6" fill="#a3ada3"/><path d="M1.2 6.2C.9 2.6 2.8.6 5.4.6s4.6 1.8 4.3 5.4c-.5.3-1 .5-1.4.2-.2-1.5-.8-2.6-1.6-3.0H3.9C3 3.6 2.5 4.8 2.4 6.2c-.4.2-.8.2-1.2 0z" fill="#211a17"/><ellipse cx="5.2" cy="5.4" rx="2.5" ry="3.0" fill="#d8b3a0"/><path d="M1.0 11c.6-1.6 2.2-2.4 4.2-2.4s3.6.8 4.2 2.4z" fill="#eceae6"/></g></svg>
<div class="t" style="left:497.30px;top:380.22px;font-size:6.5px;line-height:8.45px;color:#505355;font-weight:400;letter-spacing:-0.2px;">Winston Alb...</div>
<svg class="a" style="left:545.80px;top:378.60px" width="7.8" height="7.8" viewBox="0 0 7.8 7.8"><rect x=".5" y=".5" width="6.8" height="6.8" rx=".7" fill="none" stroke="#444746" stroke-width=".95"/><circle cx="3.9" cy="3.9" r="1.9" fill="none" stroke="#444746" stroke-width=".8"/><path d="M3.9 2.9l.9 1.5H3z" fill="#444746"/></svg>
<div class="t" style="left:557.90px;top:380.22px;font-size:6.5px;line-height:8.45px;color:#505355;font-weight:400;letter-spacing:-0.1px;">My Drive</div>
<svg class="a" style="left:612.00px;top:379.00px" width="3" height="7" viewBox="0 0 3 7"><circle cx="1.5" cy="1.5" r=".62" fill="#444746"/><circle cx="1.5" cy="3.5" r=".62" fill="#444746"/><circle cx="1.5" cy="5.5" r=".62" fill="#444746"/></svg>
<div class="a" style="left:630.20px;top:246.30px;width:3.40px;height:137.50px;background:#c6c6c6;border-radius:1.7px 1.7px 0 0;"></div>
</body></html>
